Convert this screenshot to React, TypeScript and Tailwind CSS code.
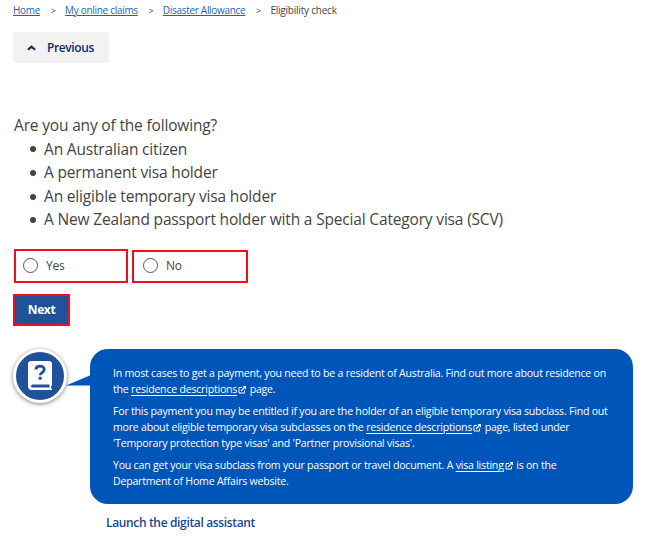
import type { ReactNode } from 'react';

const crumbs = ['Home', 'My online claims', 'Disaster Allowance'];

const criteria = [
  'An Australian citizen',
  'A permanent visa holder',
  'An eligible temporary visa holder',
  'A New Zealand passport holder with a Special Category visa (SCV)',
];

function ExternalLink({ children }: { children: ReactNode }) {
  return (
    <>
      <a href="#" className="underline underline-offset-2">{children}</a>
      <svg viewBox="0 0 16 16" className="inline-block w-[8px] h-[8px] ml-[1px] mr-[1px] align-[-1px]" fill="none" stroke="currentColor" strokeWidth="2">
        <path d="M8 3H2v11h11V9" />
        <path d="M6 10 13 3" strokeWidth="2.4" />
        <path d="M9 0h7v7z" fill="currentColor" stroke="none" />
      </svg>
    </>
  );
}

function RadioOption({ label, className }: { label: string; className: string }) {
  return (
    <label className={className}>
      <span className="w-[15px] h-[15px] shrink-0 rounded-full border-[1.5px] border-[#555] bg-white" />
      <span>{label}</span>
    </label>
  );
}

export default function App() {
  return (
    <div className="w-[650px] h-[541px] overflow-hidden bg-white pl-[13px] font-['Open_Sans','Noto_Sans',sans-serif] text-[#444]">
      {/* Breadcrumbs */}
      <nav className="flex items-center h-5 text-[10px] tracking-[-0.3px] whitespace-nowrap">
        {crumbs.map((crumb) => (
          <span key={crumb} className="flex">
            <a href="#" className="text-[#1f5fc0] underline underline-offset-1">{crumb}</a>
            <span className="w-[25px] pl-px text-center text-[9px] leading-[15px]">&gt;</span>
          </span>
        ))}
        <span className="tracking-[-0.22px]">Eligibility check</span>
      </nav>

      <button className="flex items-center w-24 h-[31px] mt-[12px] rounded-[3px] bg-[#f2f2f2] pl-[14px] pt-px text-[12px] tracking-[-0.38px] font-semibold text-[#0b2d6e]">
        <svg viewBox="0 0 10 6" className="w-[9px] h-[6px] mr-[11px]" fill="none" stroke="currentColor" strokeWidth="2.4">
          <path d="M1 5 5 1.5 9 5" />
        </svg>
        Previous
      </button>

      {/* Question */}
      <section className="mt-[51px] text-[15.5px] leading-[23.6px] tracking-[-0.17px] whitespace-nowrap">
        <p className="pl-px">Are you any of the following?</p>
        <ul>
          {criteria.map((item) => (
            <li key={item} className="flex items-center">
              <span className="w-[6px] h-[6px] ml-[17px] mr-[8px] rounded-full bg-[#444]" />
              {item}
            </li>
          ))}
        </ul>
      </section>

      <div className="flex items-end gap-[4px] h-[34px] mt-[17px] pl-px text-[12px] tracking-[-0.2px]">
        <RadioOption label="Yes" className="flex items-center gap-[8px] w-[114px] h-[34px] border-2 border-[#f0101c] pl-[7px]" />
        <RadioOption label="No" className="flex items-center gap-[8px] w-[116px] h-[33px] border-2 border-[#f0101c] pl-[9px] pb-px" />
      </div>

      <button className="block w-[57px] h-[32px] mt-[11px] border-2 border-[#f0101c] bg-[#1f5299] text-[12px] tracking-[-0.4px] font-bold text-white">
        Next
      </button>

      {/* Digital assistant */}
      <div className="flex mt-[23px]">
        <div className="flex items-center justify-center w-[54px] h-[54px] rounded-full border-[3px] border-white bg-[#1f5299] shadow-[0_1px_4px_rgba(0,0,0,0.5)]">
          <svg viewBox="0 0 24 29" className="w-[24px] h-[29px]">
            <path d="M3 0h18a3 3 0 0 1 3 3v21.500l-1 1v1.500l1 1v1H4a4 4 0 0 1-4-4V3a3 3 0 0 1 3-3z" fill="#fff" />
            <path d="M4.500 23.500h17v3h-17a1.500 1.500 0 0 1 0-3z" fill="#1f5299" />
            <path d="M8 8.500c0-2.200 1.700-3.400 4-3.400s4.200 1.300 4.200 3.500c0 3-4 2.900-4 5.600" fill="none" stroke="#1f5299" strokeWidth="2.800" />
            <rect x="10.700" y="15.800" width="3" height="3" rx="0.500" fill="#1f5299" />
          </svg>
        </div>
        <svg viewBox="0 0 25 12" className="w-[25px] h-[12px] mt-[26px] -ml-[1px] -mr-[1px]">
          <path d="M0 10.500 25 0v10.500z" fill="#0055b8" />
        </svg>
        <div className="w-[543px] h-[155px] rounded-[18px] bg-[#0055b8] pl-[23px] pt-[16px] text-[10.6px] leading-[16px] tracking-[-0.23px] text-white whitespace-nowrap">
          <p>
            In most cases to get a payment, you need to be a resident of Australia. Find out more about residence on<br />
            the <ExternalLink>residence descriptions</ExternalLink> page.
          </p>
          <p className="mt-[6px]">
            For this payment you may be entitled if you are the holder of an eligible temporary visa subclass. Find out<br />
            more about eligible temporary visa subclasses on the <ExternalLink>residence descriptions</ExternalLink> page, listed under<br />
            'Temporary protection type visas' and 'Partner provisional visas'.
          </p>
          <p className="mt-[6px]">
            You can get your visa subclass from your passport or travel document. A <ExternalLink>visa listing</ExternalLink> is on the<br />
            Department of Home Affairs website.
          </p>
        </div>
      </div>
      <a href="#" className="block mt-[10px] ml-[93px] text-[12px] leading-[18px] tracking-[-0.35px] font-semibold text-[#1b4788]">
        Launch the digital assistant
      </a>
    </div>
  );
}
